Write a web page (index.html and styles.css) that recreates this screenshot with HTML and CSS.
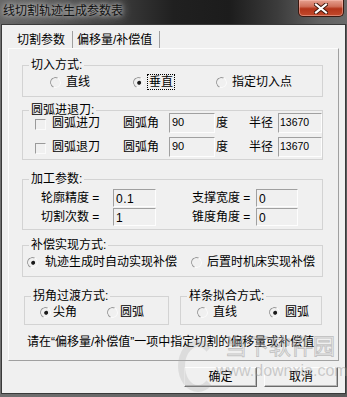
FILE: index.html
```html
<!DOCTYPE html>
<html lang="zh-CN">
<head>
<meta charset="utf-8">
<link rel="stylesheet" href="styles.css">
</head>
<body>
<div class="window">
  <div class="titlebar">
    <span class="title">线切割轨迹生成参数表</span>
    <span class="close">
      <svg width="14" height="11" viewBox="0 0 14 11"><path d="M2 1.5 L12 9.5 M12 1.5 L2 9.5" stroke="#3a1208" stroke-width="4" stroke-linecap="square"/><path d="M2 1.5 L12 9.5 M12 1.5 L2 9.5" stroke="#fff" stroke-width="2.2" stroke-linecap="square"/></svg>
    </span>
  </div>
  <div class="frame">
    <div class="client">
      <div class="tabs">
        <div class="tab tab-active">切割参数</div>
        <div class="tab tab-other">偏移量/补偿值</div>
      </div>
      <div class="panel">
        <div class="group g1">
          <div class="gtitle">切入方式:</div>
          <div class="radios r1">
            <span class="radio"><span class="rb"></span><span>直线</span></span>
            <span class="radio"><span class="rb on"></span><span class="focus">垂直</span></span>
            <span class="radio"><span class="rb"></span><span>指定切入点</span></span>
          </div>
        </div>

        <div class="group g2">
          <div class="gtitle">圆弧进退刀:</div>
          <div class="arcrow">
            <span class="cbcell"><span class="cb"></span><span>圆弧进刀</span></span>
            <span>圆弧角</span>
            <span class="field f-angle">90</span>
            <span>度</span>
            <span>半径</span>
            <span class="field f-radius">13670</span>
          </div>
          <div class="arcrow">
            <span class="cbcell"><span class="cb"></span><span>圆弧退刀</span></span>
            <span>圆弧角</span>
            <span class="field f-angle">90</span>
            <span>度</span>
            <span>半径</span>
            <span class="field f-radius">13670</span>
          </div>
        </div>

        <div class="group g3">
          <div class="gtitle">加工参数:</div>
          <div class="procrow">
            <span>轮廓精度 =</span>
            <span class="field f-proc">0.1</span>
            <span class="plabel2">支撑宽度 =</span>
            <span class="field f-proc">0</span>
          </div>
          <div class="procrow">
            <span>切割次数 =</span>
            <span class="field f-proc">1</span>
            <span class="plabel2">锥度角度 =</span>
            <span class="field f-proc">0</span>
          </div>
        </div>

        <div class="group g4">
          <div class="gtitle">补偿实现方式:</div>
          <div class="radios r4">
            <span class="radio"><span class="rb on"></span><span>轨迹生成时自动实现补偿</span></span>
            <span class="radio"><span class="rb"></span><span>后置时机床实现补偿</span></span>
          </div>
        </div>

        <div class="pair">
          <div class="group g5">
            <div class="gtitle">拐角过渡方式:</div>
            <div class="radios r5">
              <span class="radio"><span class="rb on"></span><span>尖角</span></span>
              <span class="radio"><span class="rb"></span><span>圆弧</span></span>
            </div>
          </div>
          <div class="group g6">
            <div class="gtitle">样条拟合方式:</div>
            <div class="radios r6">
              <span class="radio"><span class="rb"></span><span>直线</span></span>
              <span class="radio"><span class="rb on"></span><span>圆弧</span></span>
            </div>
          </div>
        </div>

        <div class="note">请在“偏移量/补偿值”一项中指定切割的偏移量或补偿值</div>
      </div>
      <div class="buttons">
        <span class="btn btn-ok">确定</span>
        <span class="btn btn-cancel">取消</span>
      </div>
    </div>
  </div>
  <div class="watermark">
    <span class="wm-logo"></span>
    <span class="wm-cn">当下软件园</span>
    <span class="wm-en">www.downxia.com</span>
  </div>
</div>
</body>
</html>
```

FILE: styles.css
```css
* { box-sizing: border-box; }
html, body { margin: 0; padding: 0; }
body {
  width: 347px;
  height: 397px;
  overflow: hidden;
  background: #5b5b5b;
  font-family: "Liberation Sans", "Noto Sans CJK SC", sans-serif;
  font-size: 12px;
  color: #000;
}
.window {
  position: relative;
  width: 347px;
  height: 397px;
  display: flex;
  flex-direction: column;
  background: #5e5e5e;
}
.titlebar {
  height: 24px;
  display: flex;
  align-items: flex-start;
  background: linear-gradient(to right, #666 0%, #5a5a5a 12%, #3a3a3a 35%, #202020 50%, #1c1c1c 66%, #3c3c3c 80%, #616161 92%, #6a6a6a 100%);
}
.title {
  padding: 4px 0 0 3px;
  line-height: 14px;
  color: #111;
  text-shadow: 0 0 4px #c8c8c8, 0 0 8px #b0b0b0, 0 0 12px #a0a0a0;
}
.close {
  margin-left: auto;
  margin-right: 3px;
  width: 46px;
  height: 17px;
  display: flex;
  align-items: center;
  justify-content: center;
  border: 1px solid #3b1810;
  border-top: none;
  border-radius: 0 0 5px 5px;
  background: linear-gradient(#e6a191 0%, #d0705b 40%, #b3341a 55%, #c24a2c 100%);
  box-shadow: inset 0 0 0 1px rgba(255, 200, 190, 0.45);
}
.frame {
  flex: 1;
  display: flex;
  padding: 0 2px 3px 1px;
  background: linear-gradient(to right, #707070, #5a5a5a);
}
.client {
  flex: 1;
  display: flex;
  flex-direction: column;
  border: 1px solid #3a3a3a;
  background: #f0f0f0;
  padding: 0 6px 6px 6px;
}
.tabs {
  height: 23px;
  display: flex;
  align-items: flex-end;
}
.tab {
  height: 17px;
  padding-top: 2px;
  line-height: 14px;
  border-right: 1px solid #a0a0a0;
  white-space: nowrap;
}
.tab-active { width: 65px; padding-left: 9px; }
.tab-other { width: 87px; padding-left: 4px; }
.panel {
  display: flex;
  flex-direction: column;
  border: 1px solid;
  border-color: #fcfcfc #a0a0a0 #a0a0a0 #fcfcfc;
  padding: 16px 15px 10px 13px;
}
.group {
  display: flex;
  flex-direction: column;
  border: 1px solid #d3d3d3;
}
.gtitle {
  align-self: flex-start;
  margin: -8px 0 0 6px;
  padding: 0 2px;
  line-height: 14px;
  background: #f0f0f0;
  white-space: nowrap;
}
.radios {
  display: grid;
  height: 20px;
  align-items: center;
}
.radio {
  display: flex;
  align-items: center;
  white-space: nowrap;
  line-height: 14px;
}
.rb {
  position: relative;
  width: 11px;
  height: 11px;
  flex: none;
  border-radius: 50%;
  border: 1px solid;
  border-color: #9a9a9a #fafafa #fafafa #9a9a9a;
  transform: rotate(-20deg);
}
.rb.on::after {
  content: "";
  position: absolute;
  left: 2.5px;
  top: 2.5px;
  width: 4px;
  height: 4px;
  border-radius: 50%;
  background: #1a1a1a;
}
.focus {
  outline: 1px dotted #000;
  outline-offset: 0;
  padding: 0 1px;
  margin-left: -1px;
}

.g1 { padding-bottom: 4px; }
.r1 { padding-left: 27px; grid-template-columns: 83px 83px auto; }
.r1 .rb { margin-right: 5px; }

.g2 { margin-top: 13px; padding-bottom: 2px; }
.g2 .gtitle { margin-bottom: -4px; }
.arcrow {
  display: grid;
  grid-template-columns: 100px 46px 47px 33px 29px 44px;
  height: 20px;
  align-items: center;
  line-height: 14px;
  white-space: nowrap;
}
.arcrow + .arcrow { margin-top: 4px; }
.cbcell {
  display: flex;
  align-items: center;
  padding-left: 12px;
}
.cb {
  width: 11px;
  height: 11px;
  margin: 3px 6px 0 0;
  border: 1px solid;
  border-color: #9a9a9a #fafafa #fafafa #9a9a9a;
}
.field {
  display: block;
  border: 1px solid;
  border-color: #a0a0a0 #fdfdfd #fdfdfd #a0a0a0;
  white-space: nowrap;
  overflow: hidden;
}
.f-angle, .f-radius {
  width: 46px;
  height: 20px;
  font-size: 11px;
  line-height: 13px;
  padding: 2px 0 0 2px;
}
.f-radius { width: 44px; padding-left: 1px; font-size: 10.5px; }

.g3 { margin-top: 19px; padding-bottom: 3px; }
.procrow {
  display: grid;
  grid-template-columns: 72px 43px 100px 42px;
  padding-left: 18px;
  height: 18px;
  align-items: center;
  line-height: 14px;
  white-space: nowrap;
}
.plabel2 { padding-left: 36px; }
.g3 .gtitle + .procrow { margin-top: 3px; }
.procrow + .procrow { margin-top: 1px; }
.f-proc {
  height: 18px;
  line-height: 14px;
  padding: 2px 0 0 2px;
  letter-spacing: 0.5px;
}

.g4 { margin-top: 15px; padding-bottom: 4px; }
.r4 { padding-left: 4px; grid-template-columns: 164px auto; }
.r4 .rb { margin-right: 7px; }
.r4 .radio + .radio .rb { margin-right: 5px; }

.pair {
  margin-top: 19px;
  margin-left: 2px;
  display: grid;
  grid-template-columns: 145px 142px;
  column-gap: 11px;
}
.g5, .g6 { padding-bottom: 2px; }
.g5 .radios, .g6 .radios { margin-top: -1px; }
.r5 { padding-left: 15px; grid-template-columns: 67px auto; }
.r5 .rb { margin-right: 2px; }
.r6 { padding-left: 16px; grid-template-columns: 72px auto; }
.r6 .rb { margin-right: 5px; }

.note {
  margin-top: 9px;
  padding-left: 5px;
  line-height: 16px;
  white-space: nowrap;
}

.buttons {
  margin-top: 6px;
  margin-right: 1px;
  display: flex;
  justify-content: flex-end;
  gap: 7px;
}
.btn {
  height: 20px;
  display: flex;
  align-items: center;
  justify-content: center;
  line-height: 14px;
  border: 1px solid;
  border-color: #fdfdfd #6a6a6a #6a6a6a #fdfdfd;
  box-shadow: inset -1px -1px 0 #b8b8b8;
  background: #f0f0f0;
}
.btn-ok { width: 73px; }
.btn-cancel { width: 74px; }

.watermark {
  position: absolute;
  left: 176px;
  top: 334px;
  width: 168px;
  height: 60px;
  pointer-events: none;
}
.wm-logo {
  position: absolute;
  left: 2px;
  top: 6px;
  width: 40px;
  height: 52px;
  border-radius: 50%;
  border: 7px solid rgba(170, 170, 170, 0.28);
  border-right-color: transparent;
}
.wm-cn {
  position: absolute;
  left: 49px;
  top: 0;
  font-size: 22px;
  line-height: 26px;
  color: rgba(255, 255, 255, 0.25);
  -webkit-text-stroke: 1px rgba(140, 140, 140, 0.45);
  white-space: nowrap;
}
.wm-en {
  position: absolute;
  left: 40px;
  top: 27px;
  font-size: 16px;
  line-height: 20px;
  color: rgba(150, 150, 150, 0.45);
  white-space: nowrap;
}
```
